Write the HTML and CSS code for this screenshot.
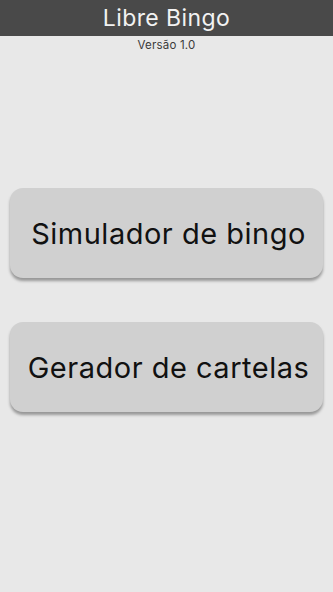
FILE: index.html
```html
<!DOCTYPE html>
<html lang="pt">
<head>
<meta charset="utf-8">
<link rel="stylesheet" href="styles.css">
</head>
<body>
<header class="bar"><h1 class="title">Libre Bingo</h1></header>
<p class="version">Versão 1.0</p>
<main class="menu">
  <button class="btn">Simulador de bingo</button>
  <button class="btn">Gerador de cartelas</button>
</main>
</body>
</html>
```
FILE: styles.css
```css
html, body {
  margin: 0;
  padding: 0;
  background: #e8e8e8;
  font-family: Inter, "Liberation Sans", sans-serif;
  height: 100%;
}
.bar {
  background: #494949;
  height: 36px;
  display: flex;
  align-items: center;
  justify-content: center;
}
.title {
  margin: 0;
  color: #f2f2f2;
  font-size: 23px;
  font-weight: 400;
  letter-spacing: 0.4px;
  line-height: 36px;
}
.version {
  margin: 2px 0 0;
  text-align: center;
  font-size: 11.5px;
  letter-spacing: 0.2px;
  line-height: 15px;
  color: #3a3a3a;
}
.menu {
  display: flex;
  flex-direction: column;
  gap: 44px;
  padding: 135px 10px 0;
}
.btn {
  height: 90px;
  border: none;
  border-radius: 13px;
  background: #d0d0d0;
  box-shadow: 0 3px 3px rgba(0,0,0,0.35);
  font-family: Inter, "Liberation Sans", sans-serif;
  font-size: 29px;
  letter-spacing: 0.5px;
  color: #111;
  padding: 0 0 0 4px;
  text-align: center;
}
```
